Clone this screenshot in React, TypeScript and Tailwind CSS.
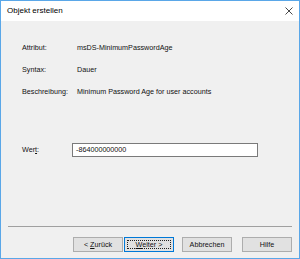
import React from "react";

const font = { fontFamily: '"Liberation Sans", Arial, sans-serif' };

function Row({ label, value }: { label: string; value: string }) {
  return (
    <div className="flex items-center h-[22px]">
      <div className="w-[55px] shrink-0">{label}</div>
      <div>{value}</div>
    </div>
  );
}

function Btn({ children, def }: { children: React.ReactNode; def?: boolean }) {
  return (
    <div
      className={
        "h-[15px] w-[50px] flex items-center justify-center bg-[#e1e1e1] border " +
        (def ? "border-[#0078d7] relative" : "border-[#adadad]")
      }
    >
      {def && (
        <div className="absolute inset-[2px] border border-dotted border-[#222]" />
      )}
      <span className="relative leading-none">{children}</span>
    </div>
  );
}

export default function App() {
  return (
    <div
      className="w-[300px] h-[259px] border border-[#5aa7e8] flex flex-col text-[7.2px] text-[#111] bg-[#f0f0f0]"
      style={font}
    >
      <div className="h-[20px] bg-white flex items-center justify-between pl-[6px] pr-[6px] shrink-0">
        <span className="text-[8px] text-black">Objekt erstellen</span>
        <svg width="8" height="8" viewBox="0 0 8 8" className="block">
          <path d="M0.5 0.5 L7.5 7.5 M7.5 0.5 L0.5 7.5" stroke="#333" strokeWidth="0.9" />
        </svg>
      </div>
      <div className="flex-1 flex flex-col pl-[21px] pt-[16px]">
        <Row label="Attribut:" value="msDS-MinimumPasswordAge" />
        <Row label="Syntax:" value="Dauer" />
        <Row label="Beschreibung:" value="Minimum Password Age for user accounts" />
        <div className="flex items-center h-[14px] mt-[40px]">
          <div className="w-[50px] shrink-0">
            Wer<span className="underline">t</span>:
          </div>
          <div className="w-[186px] h-[14px] bg-white border border-[#7a7a7a] flex items-center pl-[3px]">
            -864000000000
          </div>
        </div>
        <div className="flex-1" />
      </div>
      <div className="mx-[7px] h-px bg-[#a0a0a0] shrink-0" />
      <div className="flex items-center pl-[72px] pt-[10px] pb-[6px] shrink-0">
        <Btn>
          &lt; <span className="underline">Z</span>urück
        </Btn>
        <div className="w-[1px]" />
        <Btn def>
          <span className="underline">W</span>eiter &gt;
        </Btn>
        <div className="w-[8px]" />
        <Btn>Abbrechen</Btn>
        <div className="w-[10px]" />
        <Btn>Hilfe</Btn>
      </div>
    </div>
  );
}
